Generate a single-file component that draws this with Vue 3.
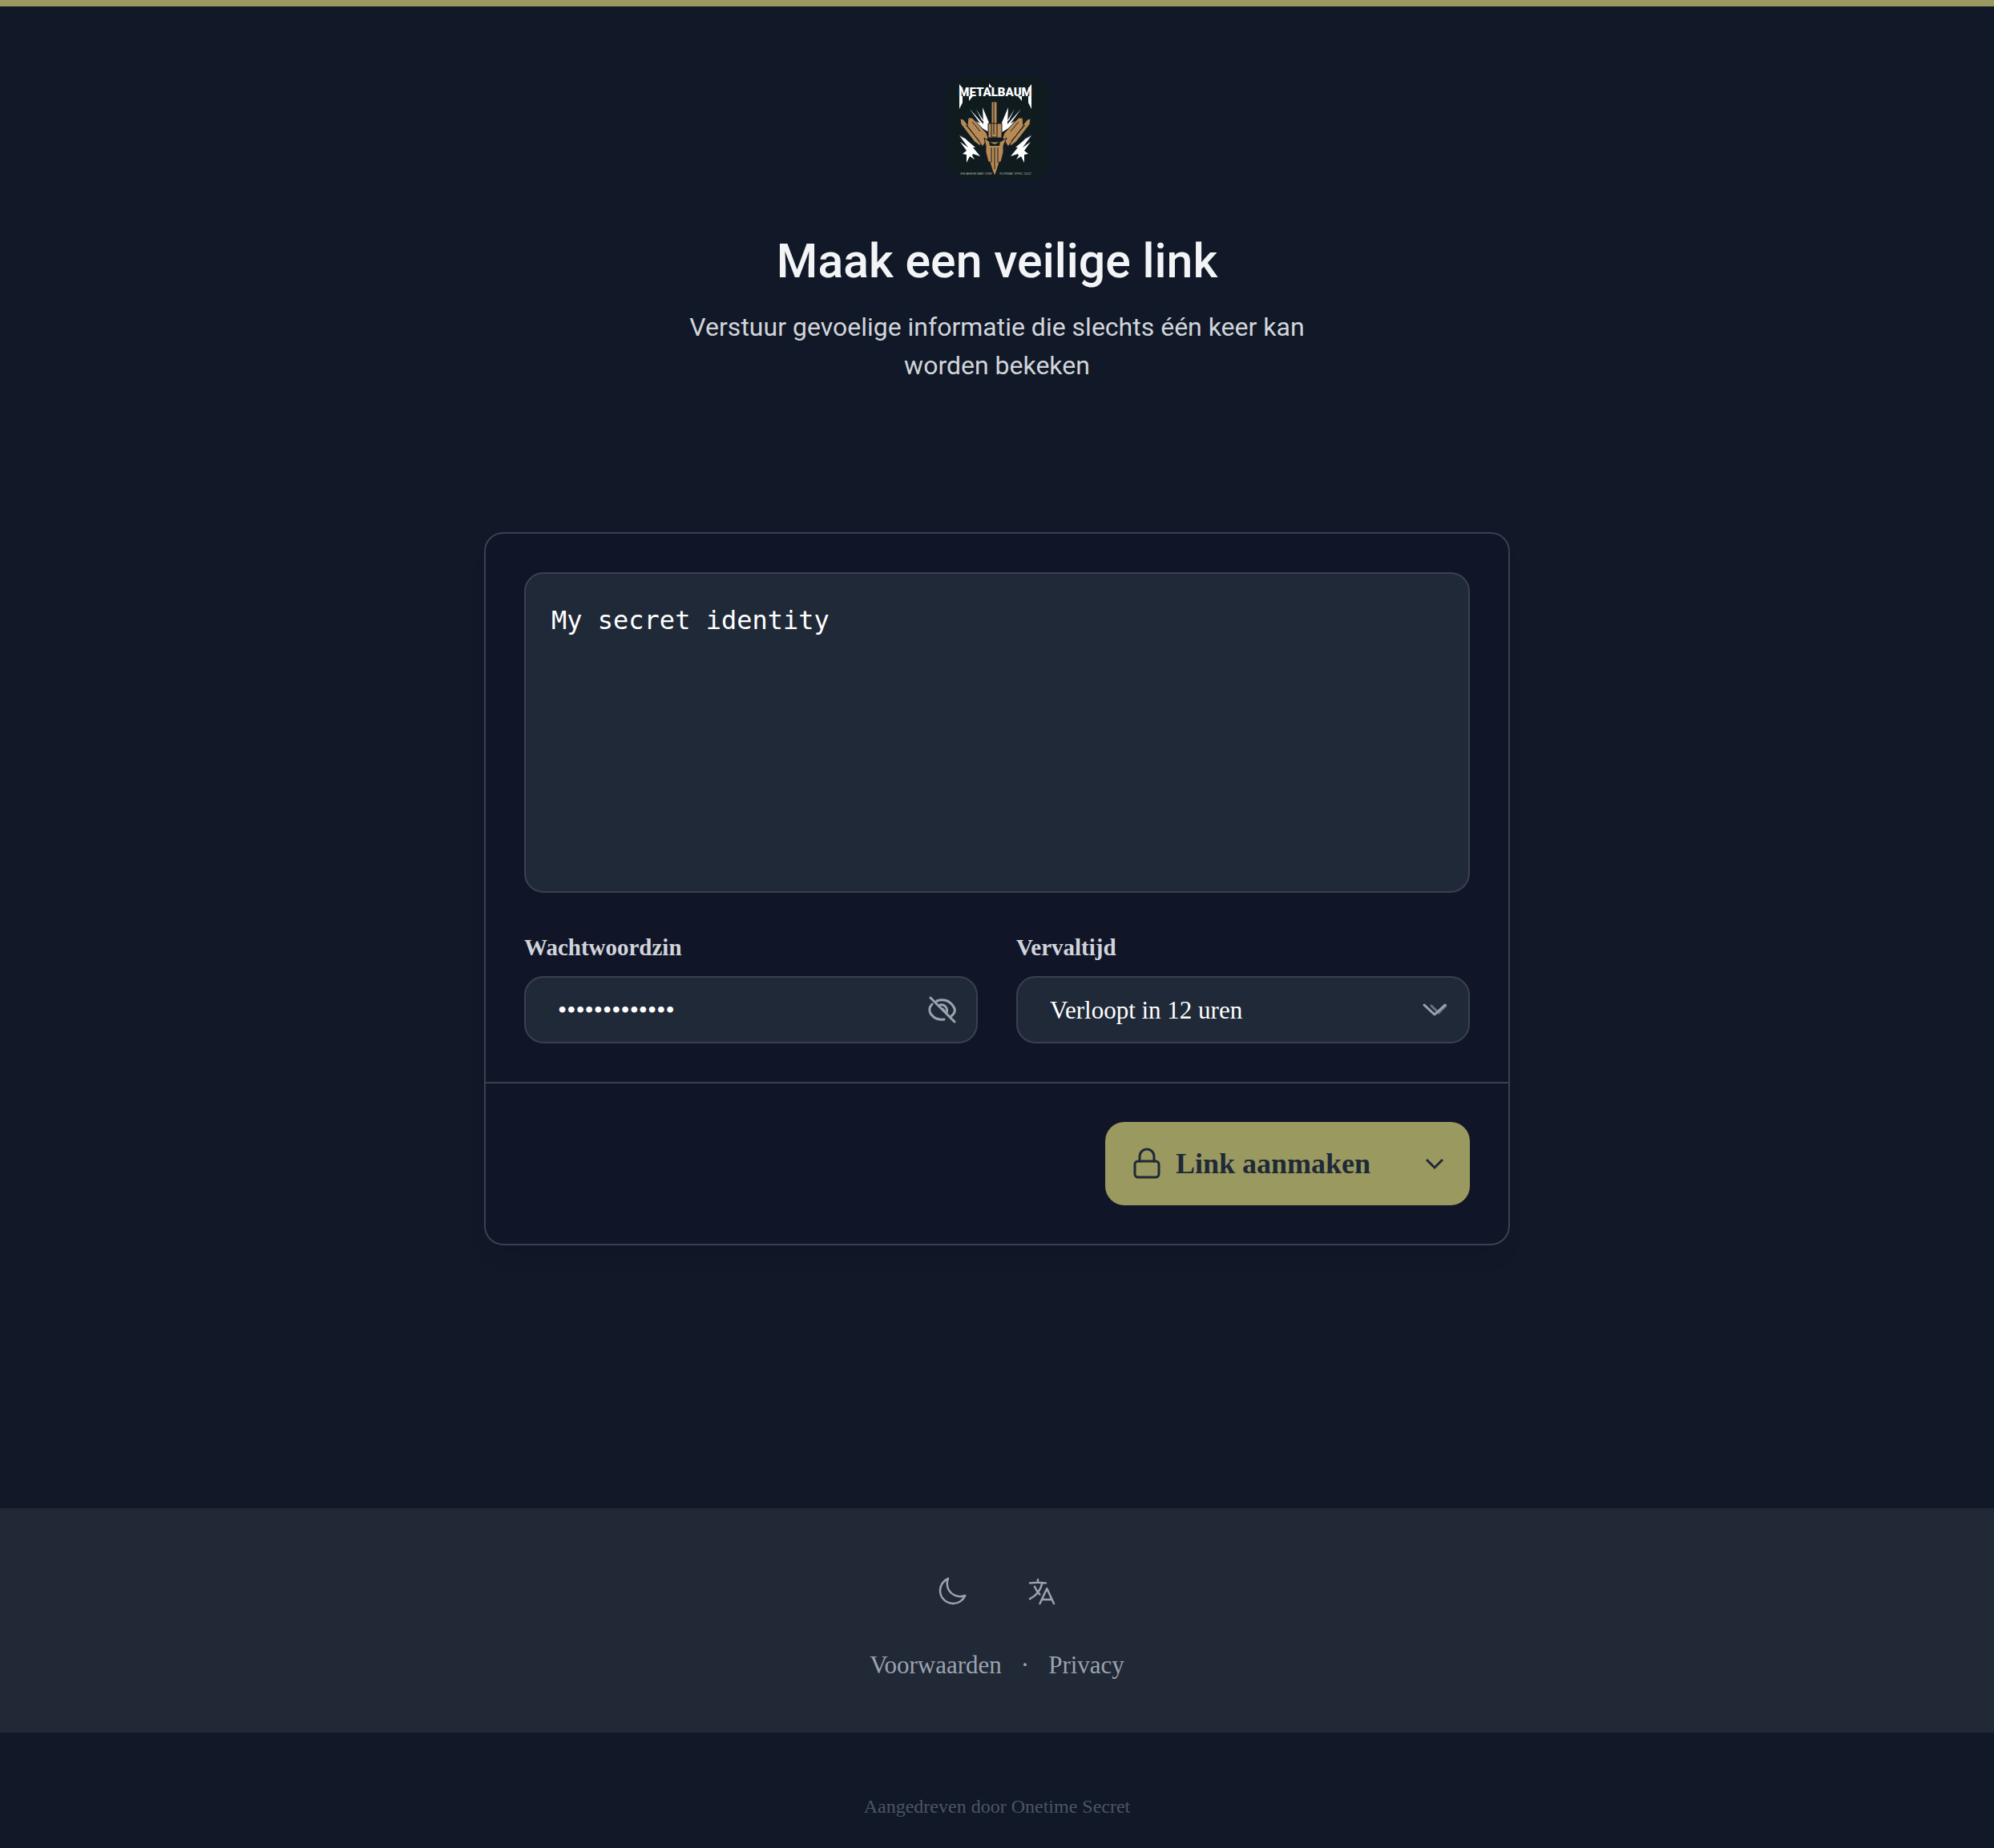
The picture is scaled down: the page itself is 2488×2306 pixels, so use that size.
<script setup>
import { ref } from 'vue'

const secret = ref('My secret identity')
const passphrase = ref('geheimwoord12')
const expiry = ref('12')
</script>

<template>
  <div class="page">
    <main class="main">
      <header class="intro">
        <svg class="logo" viewBox="0 0 128 128" role="img" aria-label="Metalbaum">
          <rect width="128" height="128" rx="24" fill="#101b20" />
          <text x="62" y="24" text-anchor="middle" class="logo-word">METALBAUM</text>
          <path fill="#fff" d="M17 9l4 5h-4zM17 24h4v8l-4 8zM107 9l-4 5h4zM107 24h-4v8l4 8zM29 24h5l-5 6zM95 24h-5l5 6zM54 8l4 5h-4z" />
          <path fill="#fff" d="M46 38l8 19v12l-10-6-9-9 8 4-13-18 17 19zM78 38l-8 19v12l10-6 9-9-8 4 13-18-17 19zM38 40l10 16-3-2zM86 40L76 56l3-2z" />
          <path fill="#fff" d="M17 71l20 17-3 0 9 11-9-3-1 2 3 5-6-4-4 8 0-10-5-1 5-4-8-11 10 7-11-15 10 6zM107 71L87 88l3 0-9 11 9-3 1 2-3 5 6-4 4 8 0-10 5-1-5-4 8-11-10 7 11-15-10 6z" />
          <g fill="#b78a55" stroke="#101b20" stroke-width="1">
            <path d="M18 52l4 1 23 28-2 5-7-5-17-22zM106 52l-4 1-23 28 2 5 7-5 17-22z" />
            <path d="M28 51l5 0 18 19 2 6-7 11-4-6-15-20zM96 51l-5 0-18 19-2 6 7 11 4-6 15-20z" />
            <path d="M53 58h17v18H53zM57 31h7v44h-7z" />
            <path d="M48 76l7 5h13l8-5-4 10v8l-3 12h-2l-3 10-3 8-3-8-3-10h-2l-3-12v-8z" />
          </g>
          <path fill="#101b20" d="M54 81l7 3 7-3-1 5H55z" />
          <path fill="none" stroke="#101b20" stroke-width="1" d="M57 88v19M61 88v27M65 88v19M60 32v40M33 56l10 12M91 56L81 68M25 60l17 20M99 60L82 80" />
          <text x="38" y="122" text-anchor="middle" class="logo-note">EM AHEIM BAR 1988</text>
          <text x="87" y="122" text-anchor="middle" class="logo-note">NORWAY SPEC 2022</text>
        </svg>
        <h1>Maak een veilige link</h1>
        <p>Verstuur gevoelige informatie die slechts één keer kan worden bekeken</p>
      </header>

      <form class="card" @submit.prevent>
        <div class="fields">
          <textarea v-model="secret" class="control secret" aria-label="Geheime inhoud" spellcheck="false"></textarea>
          <div class="row">
            <div class="field">
              <label for="passphrase">Wachtwoordzin</label>
              <div class="wrap">
                <input id="passphrase" v-model="passphrase" class="control password" type="password" autocomplete="off" />
                <button class="peek" type="button" aria-label="Wachtwoordzin tonen">
                  <svg viewBox="0 0 40 40" width="40" height="40" fill="none" stroke="currentColor" stroke-width="3" stroke-linecap="round">
                    <path d="M5 5l30 30M7 13c-4 4-4 9-1 13 4 5 10 7 16 6M13 9c7-3 15-1 20 6 3 4 3 8 0 11l-3 3" />
                    <path d="M17 14c6-1 10 4 8 10M20 19l2 2" />
                  </svg>
                </button>
              </div>
            </div>
            <div class="field">
              <label for="expiry">Vervaltijd</label>
              <div class="wrap">
                <select id="expiry" v-model="expiry" class="control">
                  <option value="12">Verloopt in 12 uren</option>
                </select>
                <svg class="caret" viewBox="0 0 40 40" width="40" height="40" fill="none" stroke-linecap="round" stroke-linejoin="round">
                  <path d="M16 15l9 9 9-9" stroke="#6b7280" stroke-width="3" />
                  <path d="M7 14l13 12 13-12" stroke="#9ca3af" stroke-width="3" />
                </svg>
              </div>
            </div>
          </div>
        </div>
        <div class="actions">
          <div class="split">
            <button class="create" type="submit">
              <svg viewBox="0 0 40 40" width="40" height="40" fill="none" stroke="currentColor" stroke-width="3" stroke-linecap="round" stroke-linejoin="round">
                <rect x="5" y="17" width="30" height="20" rx="4" />
                <path d="M11 17v-6a9 9 0 0 1 18 0v6" />
              </svg>
              <span>Link aanmaken</span>
            </button>
            <button class="more" type="button" aria-label="Meer opties">
              <svg viewBox="0 0 40 40" width="40" height="40" fill="none" stroke="currentColor" stroke-width="3">
                <path d="M10 15l10 10 10-10" />
              </svg>
            </button>
          </div>
        </div>
      </form>
    </main>

    <footer>
      <div class="band">
        <div class="tools">
          <button type="button" aria-label="Donkere modus">
            <svg viewBox="0 0 24 24" width="40" height="40" fill="none" stroke="currentColor" stroke-width="1.5" stroke-linecap="round" stroke-linejoin="round">
              <path d="M21.752 15.002A9.7 9.7 0 0 1 18 15.75 9.75 9.75 0 0 1 8.25 6c0-1.33.266-2.597.748-3.752A9.75 9.75 0 0 0 3 11.25 9.75 9.75 0 0 0 12.75 21a9.75 9.75 0 0 0 9.002-5.998" />
            </svg>
          </button>
          <button type="button" aria-label="Taal kiezen">
            <svg viewBox="0 0 24 24" width="40" height="40" fill="none" stroke="currentColor" stroke-width="1.5" stroke-linecap="round" stroke-linejoin="round">
              <path d="m10.5 21 5.25-11.25L21 21m-9-3h7.5M3 5.621a48.5 48.5 0 0 1 6-.371m0 0q1.681 0 3.334.114M9 5.25V3m3.334 2.364C11.176 10.658 7.69 15.08 3 17.502m9.334-12.138q1.344.092 2.666.257m-4.589 8.495a18 18 0 0 1-3.827-5.802" />
            </svg>
          </button>
        </div>
        <nav class="links">
          <a href="#voorwaarden">Voorwaarden</a>
          <span>·</span>
          <a href="#privacy">Privacy</a>
        </nav>
      </div>
      <p class="powered"><a href="#onetime">Aangedreven door Onetime Secret</a></p>
    </footer>
  </div>
</template>

<style>
body {
  margin: 0;
  background: #111827;
}
</style>

<style scoped>
.page {
  min-height: 100vh;
  box-sizing: border-box;
  display: flex;
  flex-direction: column;
  border-top: 8px solid #9a9960;
  color: #fff;
  font-family: "Liberation Serif", serif;
}
button {
  padding: 0;
  border: 0;
  background: none;
  color: inherit;
  font: inherit;
  cursor: pointer;
}
svg {
  display: block;
}
.main {
  flex: 1;
  display: flex;
  flex-direction: column;
  align-items: center;
  gap: 184px;
  padding: 88px 48px;
}
.intro {
  display: flex;
  flex-direction: column;
  align-items: center;
  max-width: 832px;
  font-family: Roboto, sans-serif;
  text-align: center;
}
.logo {
  width: 128px;
  height: 128px;
}
.logo-word {
  fill: #fff;
  font: 900 15px Roboto, sans-serif;
}
.logo-note {
  fill: #aab0b0;
  font: 4px "Liberation Sans", sans-serif;
}
h1 {
  margin: 64px 0 20px;
  color: #f3f4f6;
  font-size: 59px;
  font-weight: 500;
  line-height: 76px;
}
.intro p {
  margin: 0;
  color: #d1d5db;
  font-size: 32px;
  line-height: 48px;
}
.card {
  width: 100%;
  max-width: 1280px;
  box-sizing: border-box;
  border: 2px solid #3a4050;
  border-radius: 24px;
  background: #111528;
  box-shadow: 0 20px 30px -12px #0000001a;
}
.fields {
  display: flex;
  flex-direction: column;
  gap: 48px;
  padding: 48px;
}
.control {
  display: block;
  width: 100%;
  height: 84px;
  box-sizing: border-box;
  margin: 0;
  padding: 0 40px;
  border: 2px solid #3a4050;
  border-radius: 24px;
  background: #202938;
  color: #fff;
  font: 31px "Liberation Serif", serif;
  appearance: none;
}
.password {
  font-size: 32px;
}
.secret {
  height: 400px;
  padding: 38px 32px;
  font: 32px/40px "DejaVu Sans Mono", monospace;
  resize: none;
}
.row {
  display: flex;
  gap: 48px;
}
.field {
  flex: 1;
}
.field label {
  display: block;
  margin-bottom: 16px;
  color: #d1d5db;
  font-size: 29px;
  font-weight: 700;
  line-height: 40px;
}
.wrap {
  position: relative;
}
.peek,
.caret {
  position: absolute;
  top: 22px;
  right: 24px;
  color: #9ca3af;
}
.caret {
  pointer-events: none;
}
.actions {
  display: flex;
  justify-content: flex-end;
  padding: 48px;
  border-top: 2px solid #3a4050;
}
.split {
  display: flex;
  height: 104px;
  border-radius: 24px;
  background: #9a9960;
  color: #1f2937;
}
.create {
  display: flex;
  align-items: center;
  gap: 16px;
  padding: 0 36px 0 32px;
  font-size: 36px;
  font-weight: 700;
}
.more {
  padding: 0 24px;
}
.band {
  display: flex;
  flex-direction: column;
  align-items: center;
  gap: 52px;
  box-sizing: border-box;
  min-height: 280px;
  padding-top: 84px;
  background: #212836;
  color: #9ca3af;
}
.tools {
  display: flex;
  gap: 72px;
}
.links {
  display: flex;
  gap: 24px;
  font-size: 31px;
  line-height: 40px;
}
a {
  color: inherit;
  text-decoration: none;
}
.powered {
  margin: 0;
  padding: 76px 0 36px;
  color: #4b5563;
  font-size: 24px;
  line-height: 32px;
  text-align: center;
}
</style>
